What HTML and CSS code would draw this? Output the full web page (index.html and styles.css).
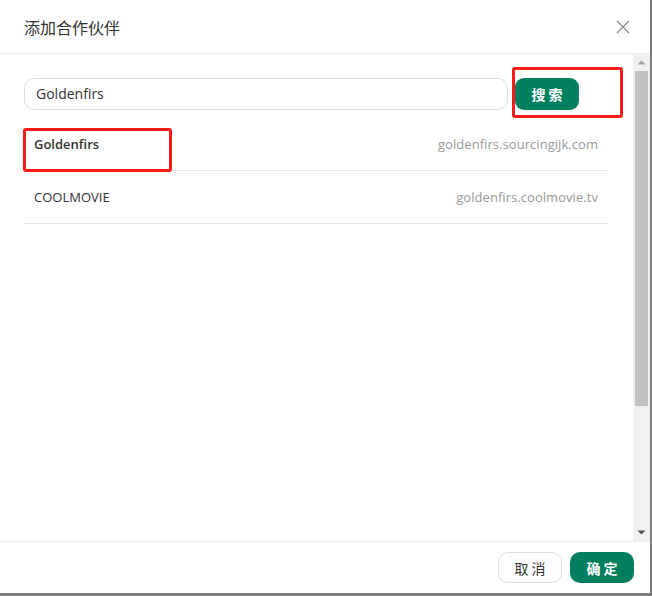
FILE: index.html
```html
<!DOCTYPE html>
<html lang="zh-CN">
<head>
<meta charset="utf-8">
<title>添加合作伙伴</title>
<link rel="stylesheet" href="styles.css">
</head>
<body>
<div class="dialog">
  <div class="header">
    <div class="title">添加合作伙伴</div>
    <svg class="close" width="14" height="14" viewBox="0 0 14 14"><path d="M1 1L13 13M13 1L1 13" stroke="#8a8a8a" stroke-width="1.3" fill="none"/></svg>
  </div>
  <div class="main">
    <div class="content">
      <div class="search-row">
        <div class="input">Goldenfirs</div>
        <div class="btn-primary search-btn">搜 索</div>
      </div>
      <div class="list">
        <div class="row"><span class="name bold">Goldenfirs</span><span class="domain">goldenfirs.sourcingijk.com</span></div>
        <div class="row"><span class="name">COOLMOVIE</span><span class="domain">goldenfirs.coolmovie.tv</span></div>
      </div>
    </div>
    <div class="scrollbar">
      <div class="arrow"><svg width="9" height="5" viewBox="0 0 9 5"><path d="M0.5 4.5L4.5 0.5L8.5 4.5Z" fill="#a3a3a3"/></svg></div>
      <div class="track"><div class="thumb"></div></div>
      <div class="arrow"><svg width="9" height="5" viewBox="0 0 9 5"><path d="M0.5 0.5L4.5 4.5L8.5 0.5Z" fill="#505050"/></svg></div>
    </div>
  </div>
  <div class="footer">
    <div class="btn-default">取 消</div>
    <div class="btn-primary">确 定</div>
  </div>
  <div class="mark mark-search"></div>
  <div class="mark mark-row"></div>
</div>
</body>
</html>
```
FILE: styles.css
```css
html, body {
  margin: 0;
  padding: 0;
}
body {
  background: #7d7d7d;
  width: 652px;
  height: 596px;
  overflow: hidden;
  font-family: "Open Sans", "Noto Sans CJK SC", sans-serif;
  color: #333;
}
.dialog {
  position: relative;
  width: 650px;
  height: 593px;
  background: #fff;
  display: flex;
  flex-direction: column;
}
.header {
  height: 53px;
  border-bottom: 1px solid #ebebeb;
  display: flex;
  align-items: center;
  justify-content: space-between;
  padding: 0 20px 0 24px;
  flex: none;
}
.title {
  font-family: "Noto Sans CJK SC", sans-serif;
  font-size: 16px;
  color: #333;
}
.main {
  flex: none;
  height: 487px;
  display: flex;
}
.content {
  flex: 1;
  padding: 24px 25px 0 24px;
}
.search-row {
  display: flex;
  gap: 7px;
  margin-right: 29px;
}
.input {
  flex: 1;
  height: 30px;
  border: 1px solid #dcdcdc;
  border-radius: 10px;
  padding: 0 11px;
  font-size: 14px;
  line-height: 30px;
  color: #333;
}
.btn-primary {
  height: 31px;
  width: 64px;
  border-radius: 9px;
  background: #00805e;
  color: #fff;
  font-family: "Noto Sans CJK SC", sans-serif;
  font-weight: bold;
  font-size: 14px;
  display: flex;
  align-items: center;
  justify-content: center;
}
.search-btn {
  height: 32px;
}
.list {
  margin-top: 8px;
}
.row {
  height: 52px;
  border-bottom: 1px solid #e8e8e8;
  display: flex;
  align-items: center;
  justify-content: space-between;
  padding: 0 10px;
  font-size: 13px;
}
.row .name {
  color: #333;
}
.row .bold {
  font-weight: 600;
}
.row .domain {
  color: #999;
  letter-spacing: 0.05px;
}
.scrollbar {
  width: 17px;
  flex: none;
  background: #f1f1f1;
  display: flex;
  flex-direction: column;
}
.arrow {
  height: 17px;
  display: flex;
  align-items: center;
  justify-content: center;
  flex: none;
}
.track {
  flex: 1;
  padding: 0 2px;
}
.thumb {
  height: 335px;
  background: #c1c1c1;
}
.footer {
  flex: 1;
  border-top: 1px solid #ebebeb;
  display: flex;
  justify-content: flex-end;
  align-items: flex-start;
  gap: 8px;
  padding: 10px 16px 0 0;
}
.btn-default {
  height: 29px;
  width: 62px;
  border: 1px solid #dcdcdc;
  border-radius: 10px;
  font-family: "Noto Sans CJK SC", sans-serif;
  font-size: 14px;
  color: #333;
  display: flex;
  align-items: center;
  justify-content: center;
}
.footer .btn-primary {
  border-radius: 10px;
}
.mark {
  position: absolute;
  border: 3px solid #ff1a1a;
  border-radius: 3px;
}
.mark-search {
  left: 512px;
  top: 67px;
  width: 105px;
  height: 45px;
}
.mark-row {
  left: 23px;
  top: 128px;
  width: 143px;
  height: 38px;
}
```
